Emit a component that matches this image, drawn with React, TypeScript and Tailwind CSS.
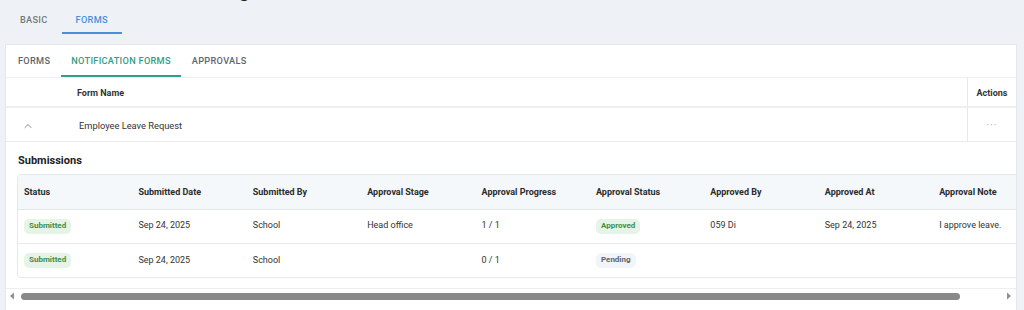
import React from 'react'
import { ChevronUp } from 'lucide-react'

type Submission = {
  status: string
  date: string
  by: string
  stage: string
  progress: string
  approval: 'Approved' | 'Pending'
  approvedBy: string
  approvedAt: string
  note: string
}

const submissions: Submission[] = [
  {
    status: 'Submitted',
    date: 'Sep 24, 2025',
    by: 'School',
    stage: 'Head office',
    progress: '1 / 1',
    approval: 'Approved',
    approvedBy: '059 Di',
    approvedAt: 'Sep 24, 2025',
    note: 'I approve leave.',
  },
  {
    status: 'Submitted',
    date: 'Sep 24, 2025',
    by: 'School',
    stage: '',
    progress: '0 / 1',
    approval: 'Pending',
    approvedBy: '',
    approvedAt: '',
    note: '',
  },
]

const columns = [
  'Status',
  'Submitted Date',
  'Submitted By',
  'Approval Stage',
  'Approval Progress',
  'Approval Status',
  'Approved By',
  'Approved At',
  'Approval Note',
]

const Badge = ({ label }: { label: string }) => {
  const tone =
    label === 'Pending'
      ? 'bg-[#f1f5f9] text-[#5f6368]'
      : 'bg-[#e6f4e7] text-[#3e8e4a]'
  return (
    <span className={`inline-flex h-[15px] items-center rounded-[5px] px-[5px] text-[8px] font-bold ${tone}`}>
      {label}
    </span>
  )
}

// the table scrolls sideways; the bar is drawn since headless chrome hides it
const ScrollBar = () => (
  <div className="flex h-[14px] items-center pl-[3px]">
    <svg width="6" height="8" viewBox="0 0 6 8" className="shrink-0">
      <path d="M5 0.5 L1 4 L5 7.5 Z" fill="#8f8f8f" />
    </svg>
    <div className="ml-[6px] h-[7px] w-[939px] rounded-full bg-[#898989]" />
    <div className="flex-1" />
    <svg width="6" height="8" viewBox="0 0 6 8" className="mr-[4px] shrink-0">
      <path d="M1 0.5 L5 4 L1 7.5 Z" fill="#8f8f8f" />
    </svg>
  </div>
)

export default function App() {
  return (
    <div className="min-h-screen overflow-hidden bg-[#eef2f7] px-[5px] font-['Roboto','Liberation_Sans',sans-serif] text-[#333]">
      <h1 className="-mt-[24px] h-[28px] pl-[70px] text-[20px] leading-[28px] font-bold text-[#222]">
        Notification Setting
      </h1>

      {/* top tabs */}
      <div className="flex h-[30px] pl-[1px]">
        <button className="px-[14px] pt-[1px] text-[9.2px] font-medium tracking-[0.3px] text-[#6f7a80]">BASIC</button>
        <button className="border-b-2 border-[#4a8fd8] px-[14px] pt-[3px] text-[9.2px] font-medium tracking-[0.3px] text-[#4a8fd8]">
          FORMS
        </button>
      </div>

      <div className="mt-[10px] w-[1012px] border border-[#e4e8ec] bg-white">
        {/* inner tabs */}
        <div className="flex h-[32px] pl-[1px]">
          <button className="px-[11px] text-[9.2px] font-medium tracking-[0.3px] text-[#5b6770]">FORMS</button>
          <button className="border-b-2 border-[#2f9e8a] px-[10px] pt-[2px] text-[9.2px] font-medium tracking-[0.3px] text-[#2f9e8a]">
            NOTIFICATION FORMS
          </button>
          <button className="px-[11px] text-[9.2px] font-medium tracking-[0.3px] text-[#5b6770]">APPROVALS</button>
        </div>

        <div className="overflow-x-auto [scrollbar-width:none]">
          {/* forms table */}
          <div className="flex h-[31px] items-center border-t border-b-2 border-t-[#eef0f2] border-b-[#edf0f2] pt-[3px] text-[9px] font-bold text-[#333]">
            <div className="w-[62px]" />
            <div className="flex-1 pl-[9px]">Form Name</div>
            <div className="-mt-[3px] flex h-[30px] w-[49px] items-center justify-center border-l border-[#e6e9ec] pt-[3px]">
              Actions
            </div>
          </div>
          <div className="flex h-[34px] items-center border-b border-[#e8ebee] text-[9.3px] text-[#333]">
            <div className="w-[62px] pt-[2px] pl-[16px]">
              <ChevronUp size={12} strokeWidth={1.75} className="text-[#777]" />
            </div>
            <div className="flex-1 pt-[2px] pl-[11px]">Employee Leave Request</div>
            <div className="flex h-full w-[49px] items-center justify-center border-l border-[#e6e9ec] pt-[2px] text-[10px] tracking-[1px] text-[#aaa]">
              ···
            </div>
          </div>

          {/* submissions */}
          <div className="w-max border-b border-[#eceef1] pt-[12px] pr-[13px] pb-[10px] pl-[11px]">
            <h2 className="pl-[1px] text-[11px] leading-[14px] font-bold text-[#222]">Submissions</h2>
            <div className="mt-[6px] overflow-hidden rounded-[4px] border border-[#e6e9ec]">
              <table className="table-fixed border-collapse text-[9px]">
                <thead>
                  <tr className="h-[34px] border-b border-[#e3e7eb] bg-[#f4f8fb]">
                    {columns.map(c => (
                      <th key={c} className="w-[114.4px] px-[6px] pt-[1px] text-left font-bold text-[#2b2b2b]">
                        {c}
                      </th>
                    ))}
                  </tr>
                </thead>
                <tbody>
                  {submissions.map((s, i) => (
                    <tr key={i} className="h-[34px] border-b border-[#e8ebee] last:border-b-0 text-[#333]">
                      <td className="px-[6px]">
                        <Badge label={s.status} />
                      </td>
                      <td className="px-[6px]">{s.date}</td>
                      <td className="px-[6px]">{s.by}</td>
                      <td className="px-[6px]">{s.stage}</td>
                      <td className="px-[6px]">{s.progress}</td>
                      <td className="px-[6px]">
                        <Badge label={s.approval} />
                      </td>
                      <td className="px-[6px]">{s.approvedBy}</td>
                      <td className="px-[6px]">{s.approvedAt}</td>
                      <td className="px-[6px]">{s.note}</td>
                    </tr>
                  ))}
                </tbody>
              </table>
            </div>
          </div>
        </div>
        <ScrollBar />
        <div className="h-[12px]" />
      </div>
    </div>
  )
}
